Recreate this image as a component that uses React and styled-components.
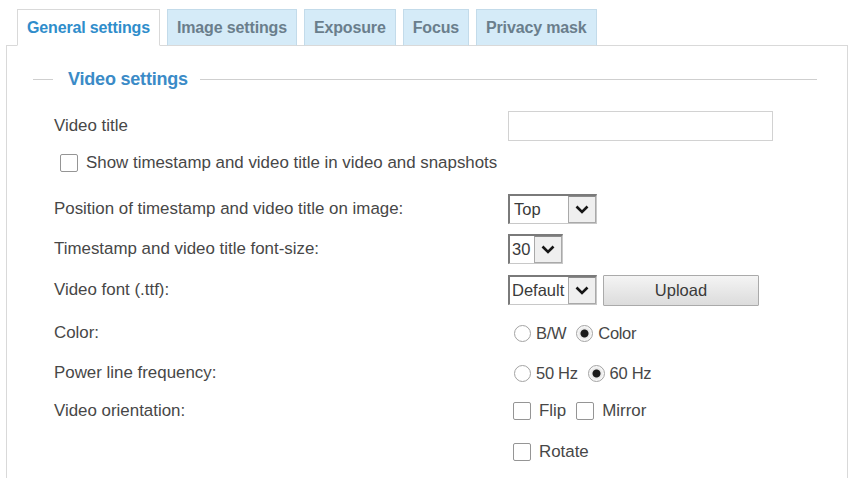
import React, { useState } from 'react';
import styled, { createGlobalStyle } from 'styled-components';

const GlobalStyle = createGlobalStyle`
  html, body {
    margin: 0;
    padding: 0;
    background: #fff;
    overflow: hidden;
  }
  body {
    font-family: "Liberation Sans", Arial, sans-serif;
    color: #474747;
  }
`;

const tabs = ['General settings', 'Image settings', 'Exposure', 'Focus', 'Privacy mask'];

const Chevron = () => (
  <svg width="14" height="9" viewBox="0 0 14 9">
    <polyline points="1.5,1.5 7,7 12.5,1.5" fill="none" stroke="#151515" strokeWidth="2.6" />
  </svg>
);

const App = () => {
  const [active, setActive] = useState(0);
  const [color, setColor] = useState('color');
  const [freq, setFreq] = useState('60');

  return (
    <Page>
      <GlobalStyle />
      <TabBar>
        {tabs.map((t, i) => (
          <Tab key={t} $active={i === active} onClick={() => setActive(i)}>
            {t}
          </Tab>
        ))}
      </TabBar>
      <Panel>
        <Legend>
          <LegendLine $w="20px" />
          <LegendText>Video settings</LegendText>
          <LegendLine />
        </Legend>

        <Form>
          <Row>
            <Label>Video title</Label>
            <Control>
              <TextInput type="text" />
            </Control>
          </Row>

          <Row $mt={-3}>
            <CheckLabel $indent="6px">
              <Check type="checkbox" />
              Show timestamp and video title in video and snapshots
            </CheckLabel>
          </Row>

          <Row $mt={6}>
            <Label>Position of timestamp and video title on image:</Label>
            <Control>
              <Select $w="89px">
                <SelectValue>Top</SelectValue>
                <SelectArrow><Chevron /></SelectArrow>
              </Select>
            </Control>
          </Row>

          <Row>
            <Label>Timestamp and video title font-size:</Label>
            <Control>
              <Select $w="55px">
                <SelectValue $pad="2px">30</SelectValue>
                <SelectArrow><Chevron /></SelectArrow>
              </Select>
            </Control>
          </Row>

          <Row $mt={1}>
            <Label>Video font (.ttf):</Label>
            <Control>
              <Select $w="89px">
                <SelectValue $pad="2px">Default</SelectValue>
                <SelectArrow><Chevron /></SelectArrow>
              </Select>
              <UploadButton type="button">Upload</UploadButton>
            </Control>
          </Row>

          <Row $mt={3}>
            <Label>Color:</Label>
            <Control>
              <RadioLabel>
                <Radio type="radio" name="color" checked={color === 'bw'} onChange={() => setColor('bw')} />
                B/W
              </RadioLabel>
              <RadioLabel>
                <Radio type="radio" name="color" checked={color === 'color'} onChange={() => setColor('color')} />
                Color
              </RadioLabel>
            </Control>
          </Row>

          <Row>
            <Label>Power line frequency:</Label>
            <Control>
              <RadioLabel>
                <Radio type="radio" name="freq" checked={freq === '50'} onChange={() => setFreq('50')} />
                50 Hz
              </RadioLabel>
              <RadioLabel>
                <Radio type="radio" name="freq" checked={freq === '60'} onChange={() => setFreq('60')} />
                60 Hz
              </RadioLabel>
            </Control>
          </Row>

          <Row $mt={-2}>
            <Label>Video orientation:</Label>
            <Control>
              <CheckLabel $indent="5px">
                <Check type="checkbox" />
                Flip
              </CheckLabel>
              <CheckLabel $indent="4px">
                <Check type="checkbox" />
                Mirror
              </CheckLabel>
            </Control>
          </Row>

          <Row $mt={1}>
            <Label />
            <Control>
              <CheckLabel $indent="5px">
                <Check type="checkbox" />
                Rotate
              </CheckLabel>
            </Control>
          </Row>
        </Form>
      </Panel>
    </Page>
  );
};

const Page = styled.div`
  padding: 9px 0 0 6px;
  width: 842px;
`;

const TabBar = styled.div`
  display: flex;
  gap: 7px;
  padding-left: 11px;
  position: relative;
  z-index: 1;
`;

const Tab = styled.div`
  height: 37px;
  box-sizing: border-box;
  padding: 0 9px;
  display: flex;
  align-items: center;
  font-size: 16px;
  font-weight: bold;
  letter-spacing: -0.15px;
  cursor: pointer;
  margin-bottom: -1px;
  border: 1px solid ${(p) => (p.$active ? '#d9d9d9' : '#c3dbea')};
  border-bottom: 1px solid ${(p) => (p.$active ? '#fff' : '#d9d9d9')};
  background: ${(p) => (p.$active ? '#fff' : '#d5ebf8')};
  color: ${(p) => (p.$active ? '#2f8dcb' : '#6a7e8c')};
`;

const Panel = styled.div`
  border: 1px solid #d9d9d9;
  min-height: 460px;
  padding: 23px 30px 0 26px;
`;

const Legend = styled.div`
  display: flex;
  align-items: center;
  height: 20px;
`;

const LegendLine = styled.div`
  height: 1px;
  background: #cfcfcf;
  width: ${(p) => p.$w || 'auto'};
  flex: ${(p) => (p.$w ? 'none' : '1')};
`;

const LegendText = styled.span`
  padding: 0 12px 0 15px;
  font-size: 18px;
  font-weight: bold;
  letter-spacing: -0.2px;
  color: #3b8bc7;
`;

const Form = styled.div`
  margin-top: 17px;
  padding-left: 21px;
`;

const Row = styled.div`
  display: flex;
  align-items: center;
  height: 40px;
  margin-top: ${(p) => p.$mt || 0}px;
`;

const Label = styled.div`
  width: 454px;
  flex: none;
  font-size: 16.9px;
  color: #474747;
`;

const Control = styled.div`
  display: flex;
  align-items: center;
  gap: 6px;
`;

const TextInput = styled.input`
  width: 265px;
  height: 30px;
  box-sizing: border-box;
  border: 1px solid #d2d2d2;
  outline: none;
  font: inherit;
`;

const Select = styled.div`
  width: ${(p) => p.$w};
  height: 30px;
  box-sizing: border-box;
  display: flex;
  border-top: 2px solid #7a7a7a;
  border-left: 2px solid #7a7a7a;
  border-right: 1px solid #c8c8c8;
  border-bottom: 1px solid #c8c8c8;
  background: #fff;
  font-size: 16.5px;
  color: #3a3a3a;
`;

const SelectValue = styled.div`
  flex: 1;
  display: flex;
  align-items: center;
  padding-left: ${(p) => p.$pad || '4px'};
  overflow: hidden;
  white-space: nowrap;
`;

const SelectArrow = styled.div`
  width: 26px;
  flex: none;
  display: flex;
  align-items: center;
  justify-content: center;
  background: #efefef;
  border: 1px solid #a9a9a9;
  border-top-color: #8a8a8a;
`;

const UploadButton = styled.button`
  width: 156px;
  height: 31px;
  border: 1px solid #aaa;
  border-radius: 1px;
  background: linear-gradient(#f4f4f4, #dcdcdc);
  font-family: "Liberation Sans", Arial, sans-serif;
  font-size: 16.5px;
  color: #3a3a3a;
  cursor: pointer;
`;

const CheckLabel = styled.label`
  display: flex;
  align-items: center;
  gap: 8px;
  margin-left: ${(p) => p.$indent || 0};
  font-size: 16.9px;
  color: #474747;
`;

const Check = styled.input`
  appearance: none;
  width: 18px;
  height: 18px;
  margin: 0;
  border: 1px solid #959595;
  border-radius: 2px;
  background: #fff;
  &:checked {
    background: #fff url("data:image/svg+xml,%3Csvg xmlns='http://www.w3.org/2000/svg' viewBox='0 0 16 16'%3E%3Cpolyline points='3,8 7,12 13,4' fill='none' stroke='%23222' stroke-width='2'/%3E%3C/svg%3E") center/14px no-repeat;
  }
`;

const RadioLabel = styled.label`
  display: flex;
  align-items: center;
  gap: 5px;
  margin-left: 6px;
  font-size: 16.5px;
  color: #474747;
  letter-spacing: -0.3px;

  & + & {
    margin-left: 4px;
  }
`;

const Radio = styled.input`
  appearance: none;
  width: 17px;
  height: 17px;
  margin: 0;
  border-radius: 50%;
  border: 1px solid #a3a3a3;
  background: #fff;
  &:checked {
    background: radial-gradient(circle, #1a1a1a 0 3.5px, #e6e6e6 4.5px, #fff 8px);
  }
`;

export default App;
